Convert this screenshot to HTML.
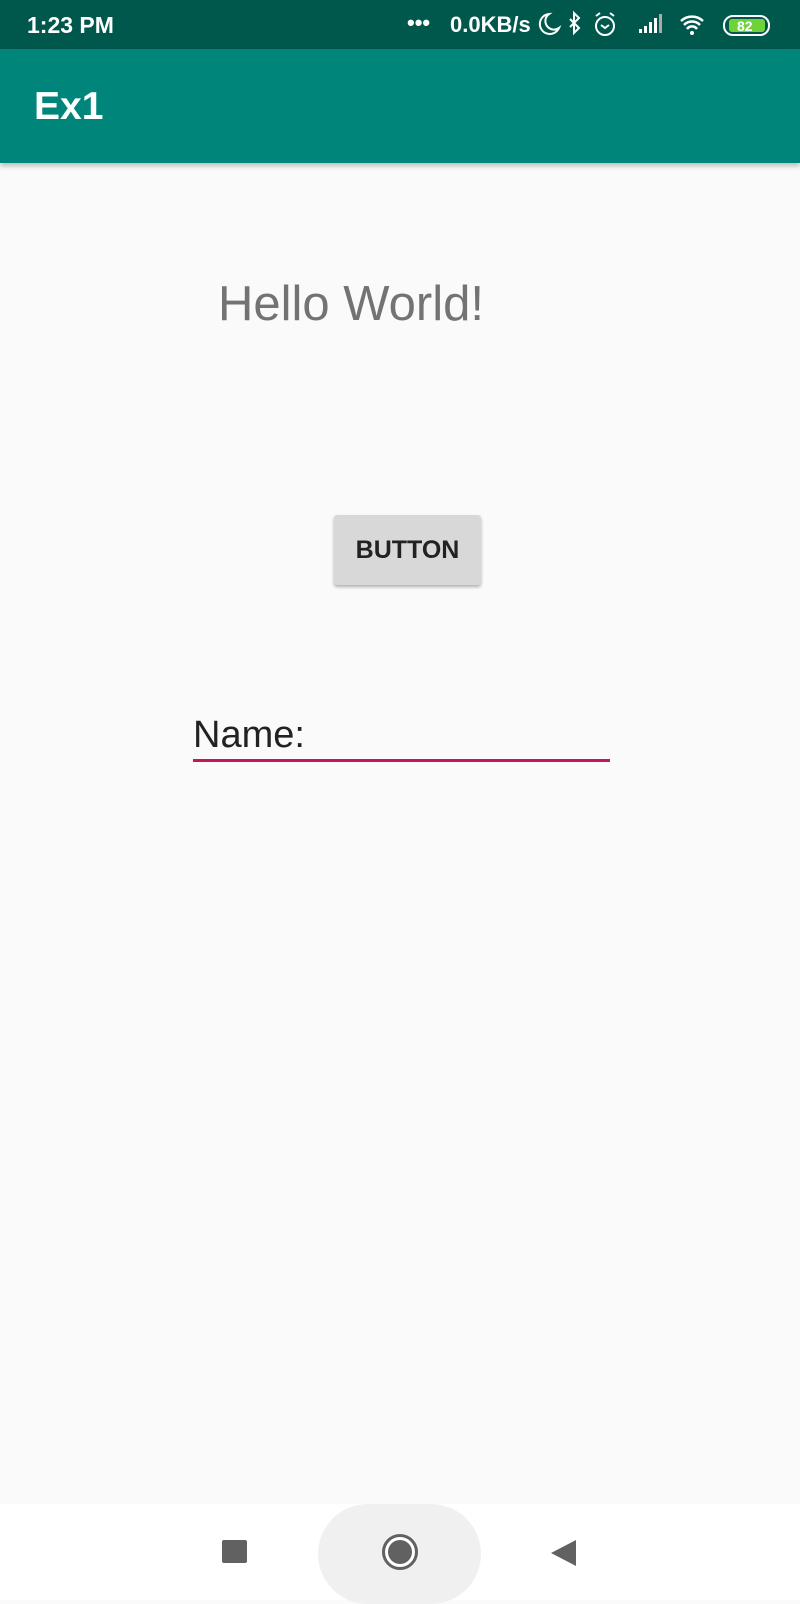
<!DOCTYPE html>
<html><head><meta charset="utf-8"><style>
*{margin:0;padding:0;box-sizing:border-box}
body{width:800px;height:1600px;background:#fafafa;font-family:"Liberation Sans",sans-serif;position:relative;overflow:hidden}
.sb{position:absolute;left:0;top:0;width:800px;height:49px;background:#00574b;color:#fff}
.ab{position:absolute;left:0;top:49px;width:800px;height:114px;background:#00857a;box-shadow:0 3px 5px rgba(0,0,0,.25)}
.abs{position:absolute}
</style></head><body>
<div class="sb">
<div class="abs" style="left:27px;top:12px;font-size:23px;font-weight:bold">1:23 PM</div>
<div class="abs" style="left:407px;top:10px;font-size:22px;font-weight:bold">•••</div>
<div class="abs" style="left:450px;top:12px;font-size:22px;font-weight:bold">0.0KB/s</div>
<svg class="abs" style="left:537px;top:10px" width="260" height="30" viewBox="0 0 260 30">
<path d="M12 4a10 10 0 1 0 10 14a8 8 0 0 1 -10 -14z" fill="none" stroke="#fff" stroke-width="2"/>
<path d="M33 9l9 9-5 5V3l5 5-9 9" fill="none" stroke="#fff" stroke-width="2"/>
<circle cx="68" cy="16" r="9" fill="none" stroke="#fff" stroke-width="2"/><path d="M64 15l4 3 4-3M59 6l4-3M77 6l-4-3" fill="none" stroke="#fff" stroke-width="2"/>
<rect x="102" y="19" width="3" height="4" fill="#fff"/><rect x="107" y="16" width="3" height="7" fill="#fff"/><rect x="112" y="12" width="3" height="11" fill="#fff"/><rect x="117" y="8" width="3" height="15" fill="#fff"/><rect x="122" y="4" width="3" height="19" fill="#aaa"/>
<path d="M144 11a16 16 0 0 1 22 0M147 15a11 11 0 0 1 16 0M150 19a6 6 0 0 1 10 0" fill="none" stroke="#fff" stroke-width="2.5"/><circle cx="155" cy="23" r="2" fill="#fff"/>
<rect x="187" y="6" width="45" height="19" rx="9" fill="none" stroke="#fff" stroke-width="2"/><rect x="192" y="9" width="36" height="13" rx="3" fill="#6fd23a"/>
<text x="200" y="21" font-size="14" font-weight="bold" fill="#fff" font-family="Liberation Sans">82</text>
</svg>
</div>
<div class="ab"><div class="abs" style="left:34px;top:36px;font-size:39px;font-weight:bold;color:#fff">Ex1</div></div>
<div class="abs" style="left:218px;top:276px;font-size:49px;color:#737373">Hello World!</div>
<div class="abs" style="left:334px;top:515px;width:147px;height:70px;background:#d8d8d8;border-radius:3px;box-shadow:0 2px 3px rgba(0,0,0,.3);color:#222;font-size:25px;font-weight:bold;text-align:center;line-height:70px">BUTTON</div>
<div class="abs" style="left:193px;top:714px;font-size:38px;color:#222">Name:</div>
<div class="abs" style="left:193px;top:759px;width:417px;height:3px;background:#c2185b"></div>
<div class="abs" style="left:0;top:1504px;width:800px;height:96px;background:#fff"></div>
<div class="abs" style="left:318px;top:1504px;width:163px;height:100px;border-radius:50px;background:#f0f0f0"></div>
<div class="abs" style="left:222px;top:1540px;width:25px;height:23px;background:#616161;border-radius:2px"></div>
<div class="abs" style="left:382px;top:1534px;width:36px;height:36px;border-radius:50%;border:3px solid #616161;background:#fff"></div>
<div class="abs" style="left:388px;top:1540px;width:24px;height:24px;border-radius:50%;background:#616161"></div>
<svg class="abs" style="left:551px;top:1539px" width="26" height="28"><path d="M0 14L25 1V27z" fill="#616161"/></svg>
</body></html>
